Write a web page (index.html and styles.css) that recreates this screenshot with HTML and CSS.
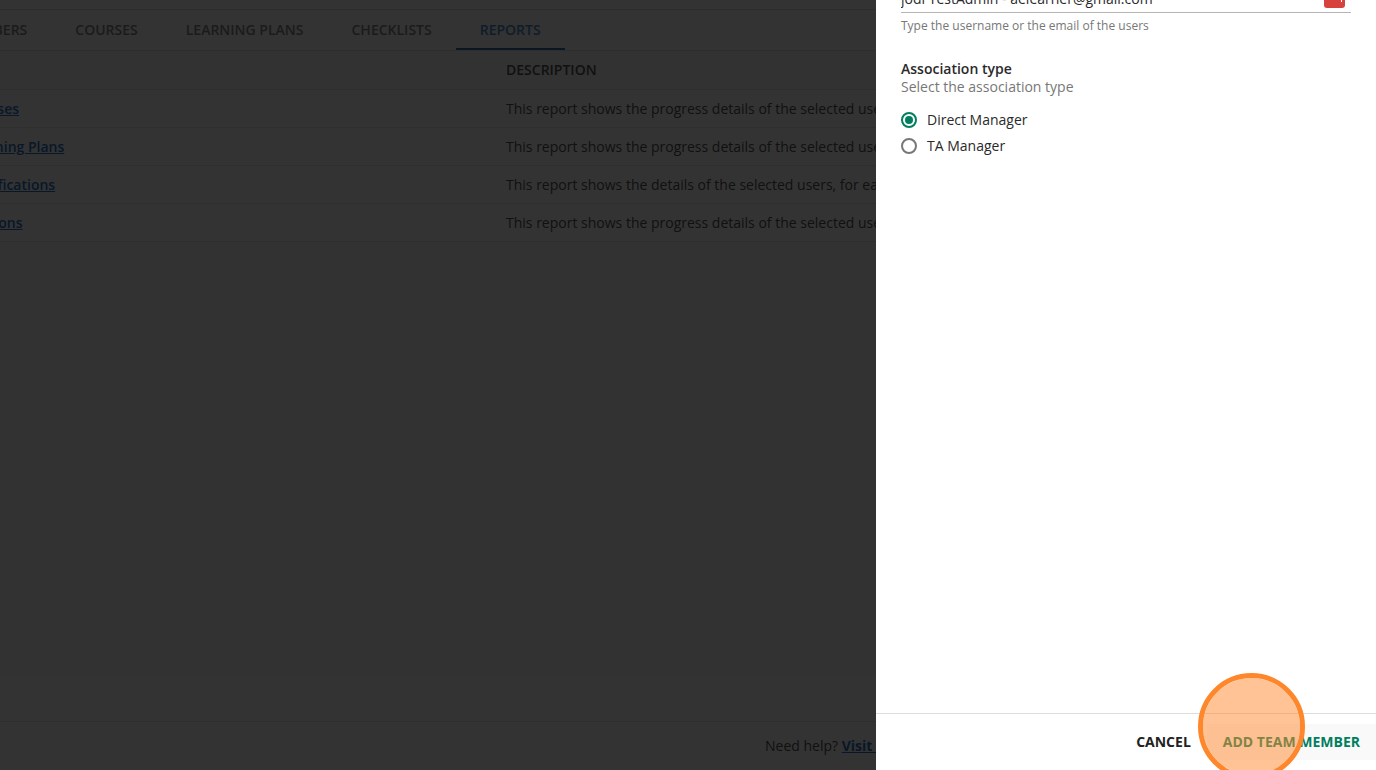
FILE: index.html
```html
<!DOCTYPE html>
<html lang="en">
<head>
    <meta charset="UTF-8">
    <meta name="viewport" content="width=device-width, initial-scale=1.0">
    <title>My Team - Reports</title>
    <link rel="stylesheet" href="styles.css">
</head>
<body>
    <div class="page">
        <nav class="tabs">
            <a href="#">MEMBERS</a>
            <a href="#">COURSES</a>
            <a href="#">LEARNING PLANS</a>
            <a href="#">CHECKLISTS</a>
            <a href="#" class="active">REPORTS</a>
        </nav>

        <main>
            <table class="reports">
                <thead>
                    <tr>
                        <th class="name"></th>
                        <th>DESCRIPTION</th>
                    </tr>
                </thead>
                <tbody>
                    <tr>
                        <td><a href="#">Courses</a></td>
                        <td>This report shows the progress details of the selected users</td>
                    </tr>
                    <tr>
                        <td><a href="#">Learning Plans</a></td>
                        <td>This report shows the progress details of the selected users</td>
                    </tr>
                    <tr>
                        <td><a href="#">Certifications</a></td>
                        <td>This report shows the details of the selected users, for each</td>
                    </tr>
                    <tr>
                        <td><a href="#">Sessions</a></td>
                        <td>This report shows the progress details of the selected users</td>
                    </tr>
                </tbody>
            </table>
        </main>

        <div class="bar"></div>
        <footer class="help">Need help? <a href="#">Visit </a></footer>
    </div>

    <div class="overlay"></div>

    <form class="drawer">
        <div class="drawer-body">
            <div class="field">
                <input id="user" type="text" value="jodi TestAdmin - aelearner@gmail.com">
                <svg class="field-icon" width="21" height="22" viewBox="0 0 21 22">
                    <rect width="21" height="21" rx="3" fill="#d8423e"/>
                    <circle cx="4" cy="10" r="2" fill="#fff"/>
                    <circle cx="9" cy="10" r="2" fill="#fff"/>
                    <circle cx="14" cy="10" r="2" fill="#fff"/>
                    <path d="M17.5 6v9" stroke="#fff"/>
                </svg>
            </div>
            <label class="hint" for="user">Type the username or the email of the users</label>

            <h2>Association type</h2>
            <p>Select the association type</p>

            <label class="option"><input type="radio" name="type" checked>Direct Manager</label>
            <label class="option"><input type="radio" name="type">TA Manager</label>
        </div>

        <div class="drawer-footer">
            <button type="button">CANCEL</button>
            <button type="button" class="confirm">ADD TEAM MEMBER</button>
            <span class="click-marker"></span>
        </div>
    </form>
</body>
</html>
```

FILE: styles.css
```css
* {
    box-sizing: border-box;
}

body {
    margin: 0;
    height: 100vh;
    overflow: hidden;
    font-family: "Open Sans", sans-serif;
    font-size: 14px;
    line-height: 18px;
    color: #2a2a2a;
}

.page {
    display: flex;
    flex-direction: column;
    height: 100vh;
    margin-right: 500px;
    padding-top: 9px;
    overflow: hidden;
    background-color: #fff;
    color: #555;
}

/* the page is scrolled sideways, so its left edge is out of view */
.tabs,
.reports {
    margin-left: -64px;
}

.tabs {
    display: flex;
    height: 42px;
    border-top: 1px solid #e0e0e0;
    border-bottom: 1px solid #e0e0e0;
}

.tabs a {
    padding: 11px 24px 9px;
    font-weight: 600;
    color: #888;
    text-decoration: none;
}

.tabs .active {
    color: #4b8fd0;
    border-bottom: 2px solid #3476ae;
}

main {
    flex: 1;
    background-color: #fafafa;
}

.reports {
    width: calc(100% + 64px);
    table-layout: fixed;
    border-spacing: 0;
    background-color: #fff;
}

.reports th,
.reports td {
    height: 38px;
    padding: 0 0 0 24px;
    border-bottom: 1px solid #e6e6e6;
    text-align: left;
    white-space: nowrap;
    overflow: hidden;
}

.reports th {
    height: 39px;
    background-color: #fafafa;
    font-weight: 600;
}

.reports .name {
    width: 546px;
}

.reports td:first-child {
    padding-left: 29px;
}

.reports a {
    font-weight: 600;
    color: #2d76c8;
}

.bar {
    height: 47px;
    border-bottom: 1px solid #e6e6e6;
}

.help {
    height: 48px;
    padding: 15px 0 0 765px;
    white-space: nowrap;
}

.help a {
    font-weight: 700;
    color: #2d76c8;
    white-space: pre;
}

.overlay {
    position: fixed;
    inset: 0;
    background-color: rgba(0, 0, 0, 0.8);
}

.drawer {
    position: fixed;
    top: 0;
    right: 0;
    bottom: 0;
    width: 500px;
    display: flex;
    flex-direction: column;
    background-color: #fff;
}

/* content is scrolled up under the top edge */
.drawer-body {
    flex: 1;
    margin-top: -13px;
    padding: 0 25px;
}

.field {
    display: flex;
    height: 26px;
    padding-right: 6px;
    border-bottom: 1px solid #b5b5b5;
}

.field input {
    flex: 1;
    height: 22px;
    padding: 0;
    border: none;
    outline: none;
    font: inherit;
    color: #2a2a2a;
}

.hint {
    display: block;
    margin-top: 4px;
    font-size: 12px;
    color: #777;
}

.drawer h2 {
    margin: 25px 0 0;
    font-size: 14px;
    font-weight: 600;
}

.drawer p {
    margin: 0 0 11px;
    color: #777;
}

.option {
    display: flex;
    align-items: center;
    gap: 10px;
    height: 26px;
}

.option input {
    appearance: none;
    width: 16px;
    height: 16px;
    margin: 0;
    border: 2px solid #777;
    border-radius: 50%;
}

.option input:checked {
    border-color: #007f5f;
    background-color: #007f5f;
    background-clip: content-box;
    padding: 2px;
}

.drawer-footer {
    position: relative;
    display: flex;
    justify-content: flex-end;
    height: 57px;
    padding: 10px 0;
    border-top: 1px solid #ddd;
}

.drawer-footer button {
    height: 36px;
    padding: 0 16px;
    border: none;
    background-color: #fff;
    font: inherit;
    font-weight: 700;
    color: #222;
    cursor: pointer;
}

.drawer-footer .confirm {
    background-color: #f9f9f9;
    color: #007f5f;
}

.click-marker {
    position: absolute;
    top: -41px;
    right: 71px;
    width: 107px;
    height: 107px;
    border: 5px solid #ff872b;
    border-radius: 50%;
    background-color: rgba(255, 135, 43, 0.5);
    background-clip: padding-box;
    pointer-events: none;
}
```
